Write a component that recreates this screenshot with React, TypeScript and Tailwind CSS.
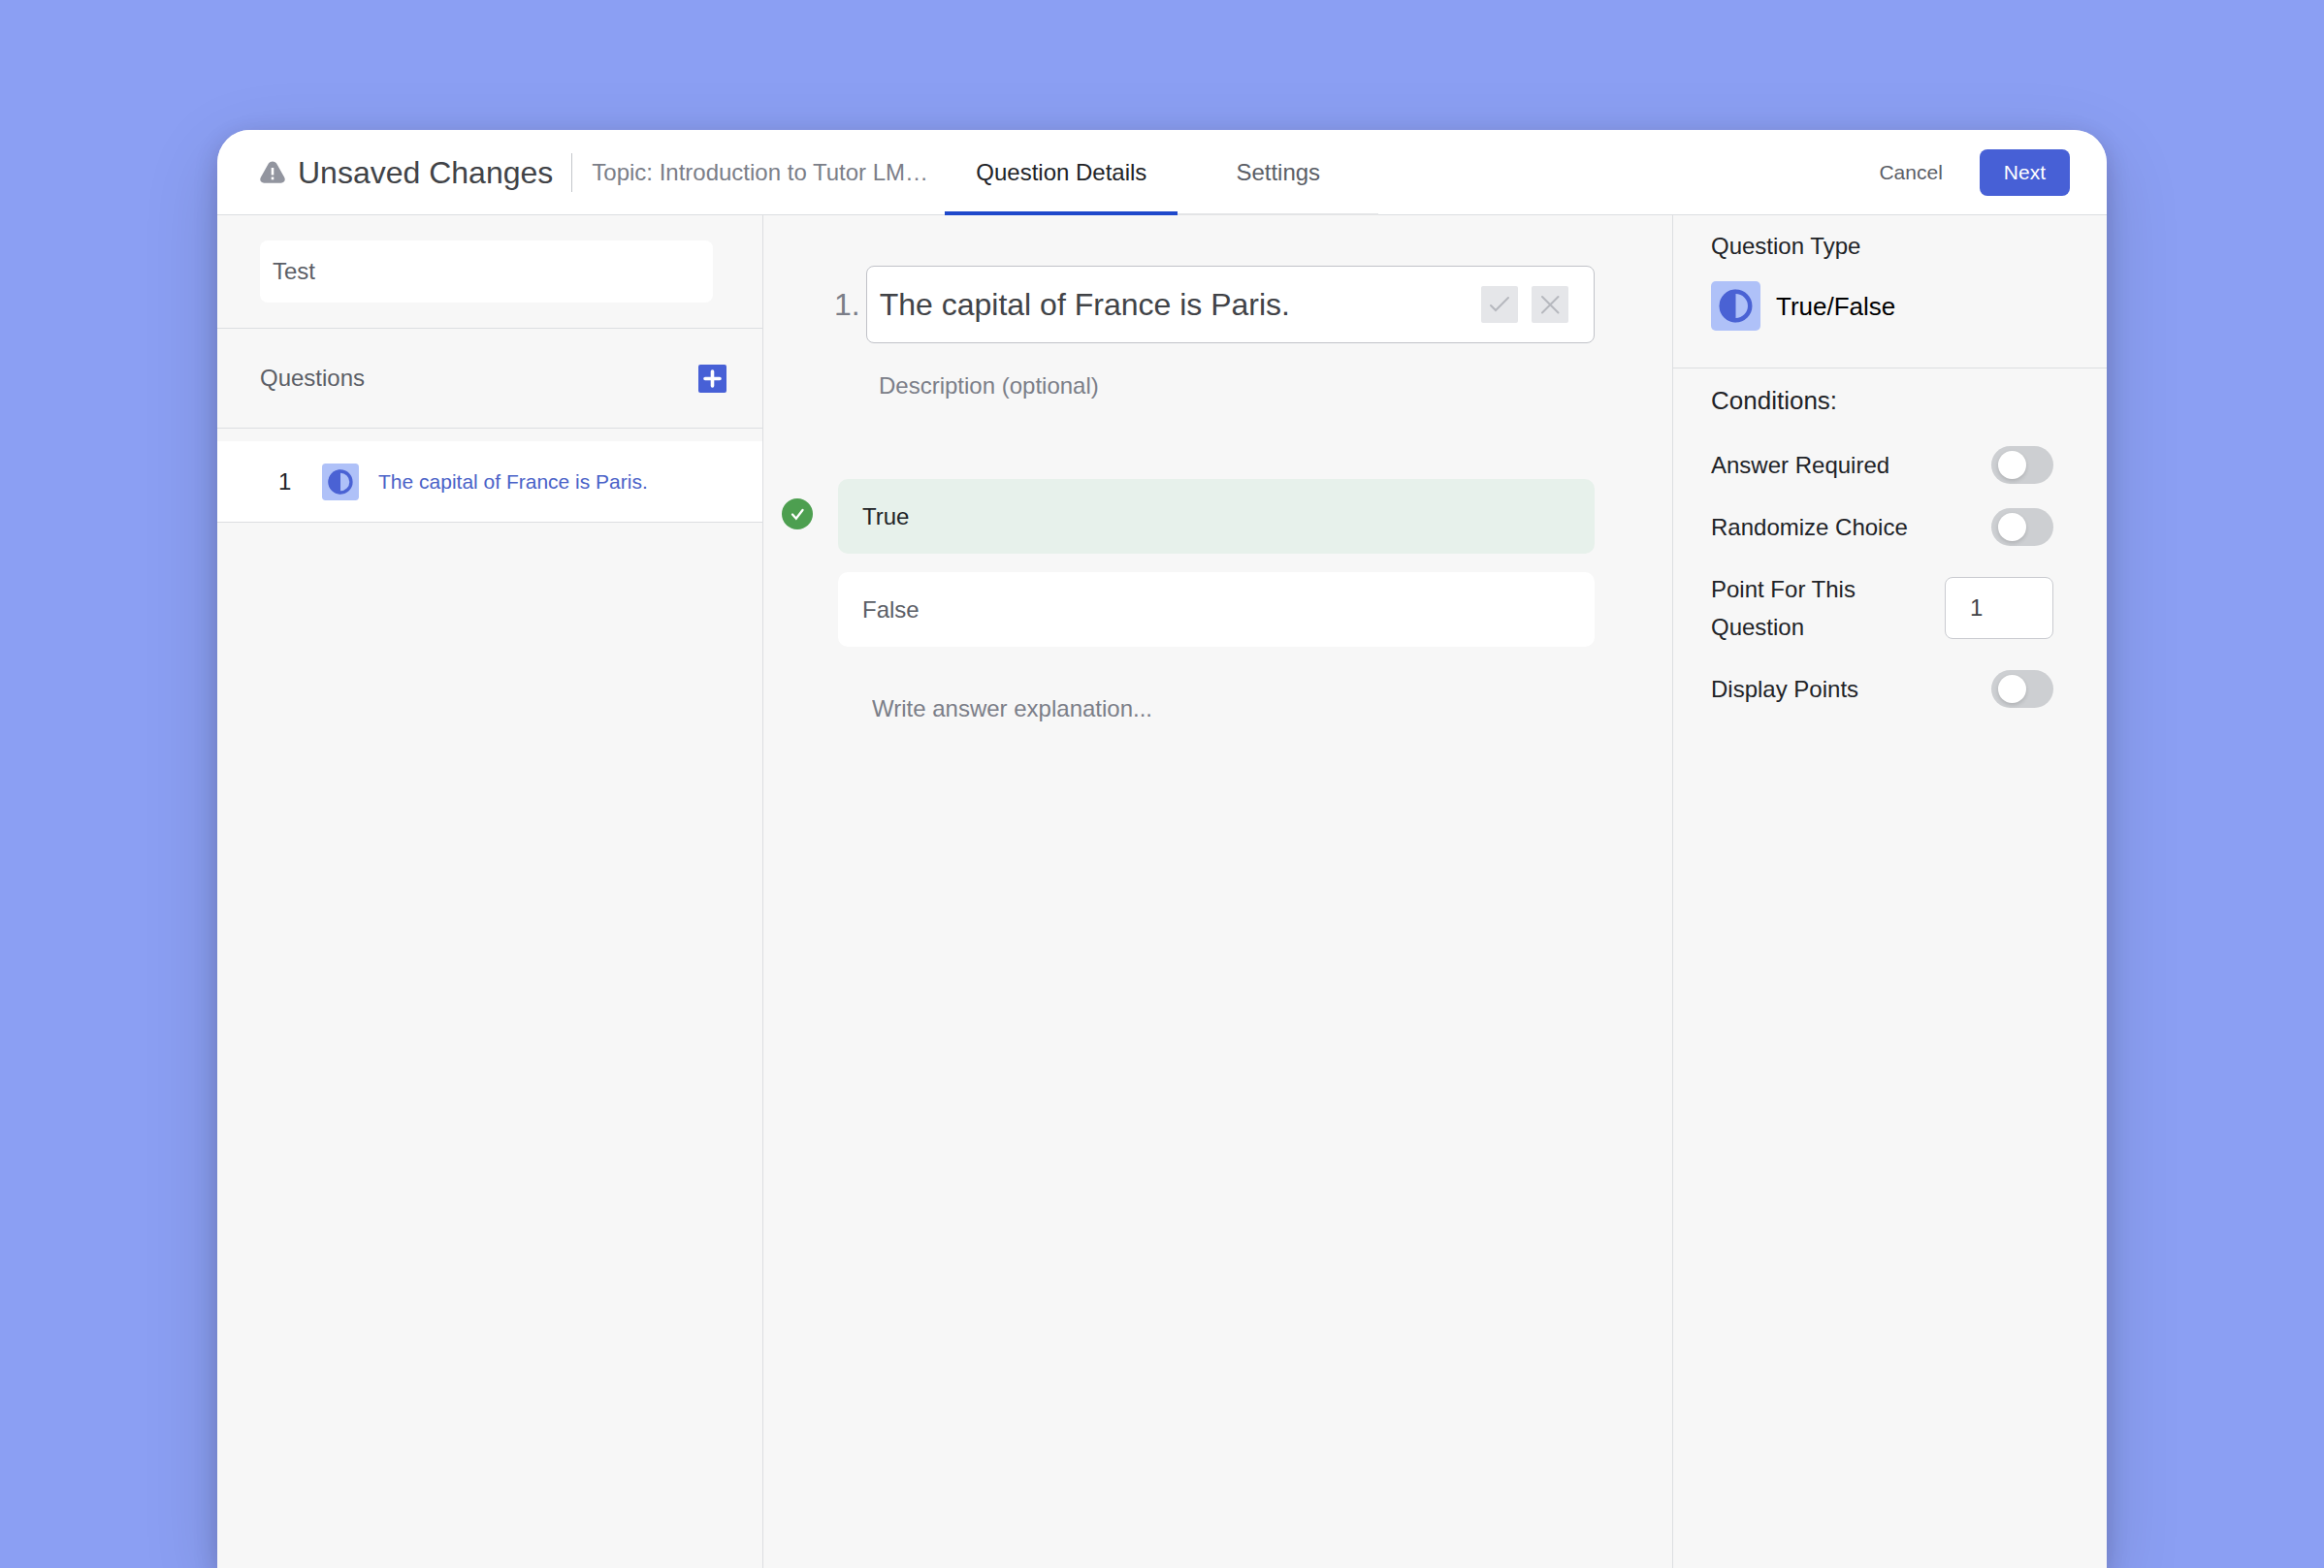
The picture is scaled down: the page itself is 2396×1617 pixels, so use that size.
import React, { useState } from 'react';

const questionTitle = 'The capital of France is Paris.';

function TrueFalseIcon({ className }: { className: string }) {
    return (
        <svg viewBox="0 0 52 52" className={className} aria-hidden="true">
            <rect width="52" height="52" rx="5" fill="#afc1f8" />
            <circle cx="26" cy="26" r="15" fill="none" stroke="#4a62d4" strokeWidth="4.600" />
            <path d="M26 9a17 17 0 0 0 0 34z" fill="#4a62d4" />
        </svg>
    );
}

function WarningIcon() {
    return (
        <svg viewBox="0 0 26 23" className="h-[23px] w-[26px] shrink-0" aria-hidden="true">
            <path
                d="M8.900 2.600C10.800-.3 15.200-.3 17.100 2.600l8 14.200c1.700 3-.1 5.900-3.300 5.900H4.200c-3.200 0-5-2.900-3.300-5.900z"
                fill="#92959f"
            />
            <path d="M13 7v7.500" stroke="#fff" strokeWidth="2.600" />
            <path d="M13 16.500v2.800" stroke="#fff" strokeWidth="2.600" />
        </svg>
    );
}

function Toggle({ id, label }: { id: string; label: string }) {
    const [checked, setChecked] = useState(false);

    return (
        <div className="flex items-center justify-between">
            <label htmlFor={id} className="text-[24px] leading-[39px] text-[#212327]">
                {label}
            </label>
            <input
                id={id}
                type="checkbox"
                role="switch"
                checked={checked}
                onChange={(e) => setChecked(e.target.checked)}
                className="h-[39px] w-16 shrink-0 cursor-pointer appearance-none rounded-full bg-[#cdcfd2] px-[7px] py-[5px] before:block before:size-[29px] before:rounded-full before:bg-white before:shadow-[0_2px_4px_rgba(0,0,0,0.15)] checked:bg-[#4a62d8] checked:before:translate-x-[21px]"
            />
        </div>
    );
}

export default function App() {
    const [answer, setAnswer] = useState('True');

    return (
        <div className="flex min-h-screen flex-col overflow-hidden bg-[#8b9ff3] px-56 pt-[134px] font-['Liberation_Sans',Arial,sans-serif]">
            <div className="flex flex-1 flex-col rounded-t-[34px] bg-[#f7f7f7] shadow-[0_8px_24px_rgba(30,0,40,0.2),0_24px_80px_rgba(0,20,0,0.14)]">
                {/* Header */}
                <header className="flex h-22 items-stretch rounded-t-[34px] border-b border-[#dcdee1] bg-white pr-[38px] pl-11">
                    <div className="flex items-center">
                        <WarningIcon />
                        <h1 className="ml-[13px] text-[32px] leading-10 text-[#414347]">Unsaved Changes</h1>
                        <span className="ml-[19px] h-10 w-px bg-[#c4c6cb]" />
                        <span className="ml-5 w-[364px] truncate text-[24px] leading-8 text-[#7b7e88]">
                            Topic: Introduction to Tutor LM…
                        </span>
                    </div>
                    <nav className="-mb-px flex items-stretch text-[24px]">
                        <button type="button" className="rounded-t-[4px] border-b-4 border-[#1f49cb] px-8 pt-1 text-[#212327]">
                            Question Details
                        </button>
                        <button type="button" className="border-b-2 border-[#e3e4e6] px-[60px] pt-0.5 text-[#5b5e66]">
                            Settings
                        </button>
                    </nav>
                    <div className="ml-auto flex items-center gap-[38px] text-[21px]">
                        <button type="button" className="text-[#5b5e66]">Cancel</button>
                        <button type="button" className="h-12 rounded-lg bg-[#4760d6] px-[25px] text-white">Next</button>
                    </div>
                </header>

                <div className="flex flex-1">
                    {/* Quiz and question list */}
                    <aside className="w-[563px] shrink-0 border-r border-[#dcdee1]">
                        <div className="border-b border-[#dcdee1] py-[26px] pr-[51px] pl-11">
                            <input
                                type="text"
                                aria-label="Quiz title"
                                defaultValue="Test"
                                className="h-16 w-full rounded-lg bg-white px-[13px] text-[24px] text-[#5b5e66]"
                            />
                        </div>
                        <div className="flex h-[103px] items-center justify-between border-b border-[#dcdee1] pr-[37px] pl-11">
                            <h2 className="text-[24px] text-[#5b5e66]">Questions</h2>
                            <button type="button" aria-label="Add question" className="size-[29px]">
                                <svg viewBox="0 0 29 29" aria-hidden="true">
                                    <rect width="29" height="29" rx="2" fill="#4760d6" />
                                    <path d="M14.500 7v15M7 14.500h15" stroke="#fff" strokeWidth="3.600" strokeLinecap="round" />
                                </svg>
                            </button>
                        </div>
                        <ul className="pt-[13px]">
                            <li className="flex h-[84px] items-center border-b border-[#dcdee1] bg-white pl-[63px]">
                                <span className="w-[45px] text-[24px] text-[#212327]">1</span>
                                <TrueFalseIcon className="size-[38px]" />
                                <a href="#question-1" className="ml-5 text-[21px] text-[#4a62c8]">{questionTitle}</a>
                            </li>
                        </ul>
                    </aside>

                    {/* Question editor */}
                    <main className="min-w-0 flex-1 pt-[52px] pr-20 pl-[19px]">
                        <div className="flex items-center gap-1.5 pl-[54px]">
                            <label htmlFor="question-title" className="text-[32px] text-[#7b7e88]">1.</label>
                            <div className="flex h-20 flex-1 items-center gap-3.5 rounded-lg border border-[#c0c2c8] bg-white pr-[26px] pl-[13px]">
                                <input
                                    id="question-title"
                                    type="text"
                                    defaultValue={questionTitle}
                                    className="h-full min-w-0 flex-1 text-[32px] text-[#414347]"
                                />
                                <button type="button" aria-label="Save title" className="size-[38px] rounded-[2px] bg-[#e5e6e9]">
                                    <svg viewBox="0 0 38 38" fill="none" stroke="#b6b8be" strokeWidth="2" strokeLinecap="round" aria-hidden="true">
                                        <path d="M10 20l5 5L28 12" />
                                    </svg>
                                </button>
                                <button type="button" aria-label="Discard title" className="size-[38px] rounded-[2px] bg-[#e5e6e9]">
                                    <svg viewBox="0 0 38 38" fill="none" stroke="#b6b8be" strokeWidth="2" strokeLinecap="round" aria-hidden="true">
                                        <path d="M11 11l16.500 16.500M27.500 11L11 27.500" />
                                    </svg>
                                </button>
                            </div>
                        </div>
                        <div className="pt-6 pl-[100px]">
                            <input
                                type="text"
                                aria-label="Description"
                                placeholder="Description (optional)"
                                className="h-10 w-full text-[24px] placeholder:text-[#7b7e88]"
                            />
                        </div>

                        <div className="mt-[76px] flex flex-col gap-[19px]">
                            {['True', 'False'].map((option) => (
                                <label key={option} className="flex h-[77px] cursor-pointer">
                                    <input
                                        type="radio"
                                        name="answer"
                                        value={option}
                                        checked={answer === option}
                                        onChange={() => setAnswer(option)}
                                        className="sr-only"
                                    />
                                    <svg viewBox="0 0 32 32" className={`mt-5 size-8 shrink-0 ${answer === option ? '' : 'invisible'}`} aria-hidden="true">
                                        <circle cx="16" cy="16" r="16" fill="#4d9f50" />
                                        <path d="M11 16.500l3.800 4.200L21.500 12" fill="none" stroke="#fff" strokeWidth="2.300" strokeLinecap="round" />
                                    </svg>
                                    <span
                                        className={`ml-[26px] flex flex-1 items-center rounded-[10px] px-[25px] text-[24px] ${
                                            answer === option ? 'bg-[#e7f1eb] text-[#212327]' : 'bg-white text-[#5b5e66]'
                                        }`}
                                    >
                                        {option}
                                    </span>
                                </label>
                            ))}
                        </div>

                        <div className="pt-11 pl-[93px]">
                            <input
                                type="text"
                                aria-label="Answer explanation"
                                placeholder="Write answer explanation..."
                                className="h-10 w-full text-[24px] placeholder:text-[#7b7e88]"
                            />
                        </div>
                    </main>

                    {/* Question settings */}
                    <aside className="w-[448px] shrink-0 border-l border-[#dcdee1]">
                        <section className="h-[158px] border-b border-[#dcdee1] pt-3 pl-[39px]">
                            <h2 className="text-[24px] leading-[39px] text-[#212327]">Question Type</h2>
                            <div className="mt-[17px] flex items-center">
                                <TrueFalseIcon className="size-[51px]" />
                                <span className="ml-4 text-[26px] leading-8 text-black">True/False</span>
                            </div>
                        </section>
                        <section className="pt-3.5 pr-[55px] pl-[39px]">
                            <h2 className="text-[26px] leading-[39px] text-[#212327]">Conditions:</h2>
                            <div className="mt-[27px] flex flex-col gap-[25px]">
                                <Toggle id="answer-required" label="Answer Required" />
                                <Toggle id="randomize-choice" label="Randomize Choice" />
                                <div className="flex items-center justify-between">
                                    <label htmlFor="points" className="w-44 text-[24px] leading-[39px] text-[#212327]">
                                        Point For This Question
                                    </label>
                                    <input
                                        id="points"
                                        type="text"
                                        inputMode="numeric"
                                        defaultValue="1"
                                        className="h-16 w-28 rounded-lg border border-[#c9cbd0] bg-white px-[25px] text-[24px] text-[#414347]"
                                    />
                                </div>
                                <Toggle id="display-points" label="Display Points" />
                            </div>
                        </section>
                    </aside>
                </div>
            </div>
        </div>
    );
}
